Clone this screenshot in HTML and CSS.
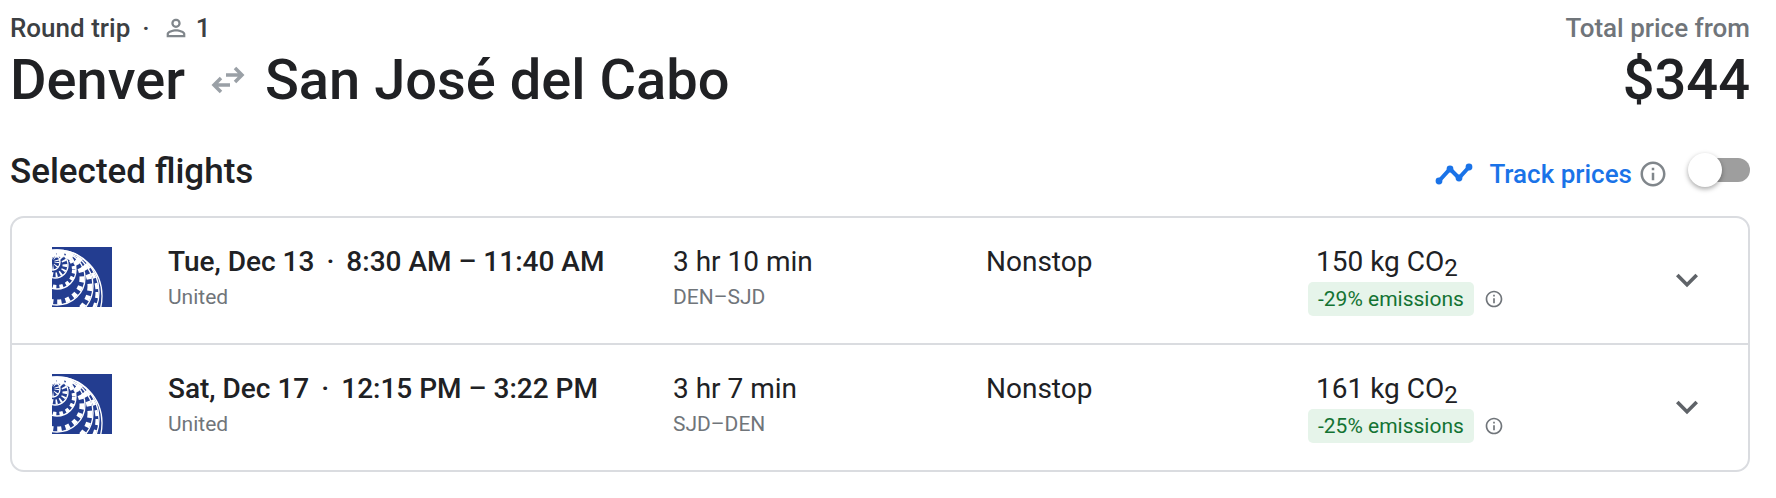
FILE: index.html
```html
<!DOCTYPE html>
<html lang="en">
  <head>
    <meta charset="utf-8">
    <meta name="viewport" content="width=device-width, initial-scale=1">
    <title>Denver to San José del Cabo</title>
    <link rel="stylesheet" href="styles.css">
  </head>
  <body>
    <!-- Shared icons -->
    <svg class="sprite" aria-hidden="true">
      <symbol id="info" viewBox="0 0 24 24">
        <path d="M11 7h2v2h-2zm0 4h2v6h-2zm1-9C6.48 2 2 6.48 2 12s4.48 10 10 10 10-4.48 10-10S17.52 2 12 2zm0 18c-4.41 0-8-3.59-8-8s3.59-8 8-8 8 3.59 8 8-3.59 8-8 8z"/>
      </symbol>
      <symbol id="chevron" viewBox="0 0 24 24">
        <path d="M7.41 8.59L12 13.17l4.59-4.58L18 10l-6 6-6-6z"/>
      </symbol>
      <symbol id="united" viewBox="0 0 60 60">
        <rect width="60" height="60" fill="#233d90"/>
        <g fill="none" stroke="#fff">
          <g stroke-width="1.3">
            <ellipse cx="1" cy="15" rx="7" ry="8"/>
            <ellipse cx="3" cy="18" rx="13" ry="13"/>
            <ellipse cx="5" cy="23" rx="19" ry="19"/>
            <ellipse cx="5" cy="31" rx="28" ry="27"/>
            <ellipse cx="5" cy="39" rx="36" ry="35"/>
            <ellipse cx="5" cy="45" rx="42" ry="42"/>
            <ellipse cx="5" cy="49" rx="45" ry="46"/>
          </g>
          <ellipse cx="1" cy="15" rx="4" ry="5" stroke-width="5" stroke-dasharray="1 2.2"/>
          <ellipse cx="3" cy="18" rx="10" ry="10" stroke-width="5" stroke-dasharray="1.8 2.6"/>
          <ellipse cx="5" cy="23" rx="17" ry="17" stroke-width="4" stroke-dasharray="3.6 3.2"/>
          <ellipse cx="5" cy="31" rx="25" ry="24" stroke-width="5" stroke-dasharray="4.4 4"/>
          <ellipse cx="5" cy="39" rx="33" ry="32" stroke-width="5" stroke-dasharray="5 4.6"/>
          <ellipse cx="5" cy="45" rx="40" ry="40" stroke-width="3" stroke-dasharray="6 5"/>
        </g>
      </symbol>
    </svg>

    <div class="container">
      <header class="trip">
        <div>
          <div class="trip-info">
            <span>Round trip</span>
            <span class="dot">·</span>
            <svg class="person" viewBox="0 0 24 24" aria-hidden="true">
              <path d="M12 5.9a2.1 2.1 0 1 1 0 4.2 2.1 2.1 0 0 1 0-4.2m0 9c2.97 0 6.1 1.46 6.1 2.1v1.1H5.9V17c0-.64 3.13-2.1 6.1-2.1M12 4C9.79 4 8 5.79 8 8s1.79 4 4 4 4-1.79 4-4-1.79-4-4-4zm0 9c-2.67 0-8 1.34-8 4v3h16v-3c0-2.66-5.33-4-8-4z"/>
            </svg>
            <span>1</span>
          </div>
          <h1>
            Denver
            <svg class="swap" viewBox="0 0 34 28" aria-label="to and from">
              <path d="M15 9h16M24 2l7 7-7 7M19 19H3M10 12l-7 7 7 7"/>
            </svg>
            San José del Cabo
          </h1>
        </div>
        <div class="total">
          <div class="total-label">Total price from</div>
          <div class="price">$344</div>
        </div>
      </header>

      <div class="section-header">
        <h2>Selected flights</h2>
        <div class="track">
          <svg class="trend" viewBox="0 0 38 22" aria-hidden="true">
            <path d="M4 18L15 6l9 9L34 4"/>
            <circle cx="4" cy="18" r="3.4"/>
            <circle cx="15" cy="6" r="3.4"/>
            <circle cx="24" cy="15" r="3.4"/>
            <circle cx="34" cy="4" r="3.4"/>
          </svg>
          <label for="track">Track prices</label>
          <button class="icon-button" aria-label="About price tracking">
            <svg class="info-large"><use href="#info"/></svg>
          </button>
          <input class="toggle" type="checkbox" id="track">
        </div>
      </div>

      <ul class="flights">
        <li class="flight">
          <svg class="logo" aria-hidden="true"><use href="#united"/></svg>
          <div>
            <div class="main strong">Tue, Dec 13<span class="dot">·</span>8:30 AM – 11:40 AM</div>
            <div class="sub">United</div>
          </div>
          <div>
            <div class="main">3 hr 10 min</div>
            <div class="sub">DEN–SJD</div>
          </div>
          <div class="main">Nonstop</div>
          <div>
            <div class="main co2">150 kg CO<sub>2</sub></div>
            <div class="emissions">
              <span class="badge">-29% emissions</span>
              <button class="icon-button" aria-label="About emissions">
                <svg class="info-small"><use href="#info"/></svg>
              </button>
            </div>
          </div>
          <button class="icon-button expand" aria-label="Flight details">
            <svg class="chevron"><use href="#chevron"/></svg>
          </button>
        </li>
        <li class="flight">
          <svg class="logo" aria-hidden="true"><use href="#united"/></svg>
          <div>
            <div class="main strong">Sat, Dec 17<span class="dot">·</span>12:15 PM – 3:22 PM</div>
            <div class="sub">United</div>
          </div>
          <div>
            <div class="main">3 hr 7 min</div>
            <div class="sub">SJD–DEN</div>
          </div>
          <div class="main">Nonstop</div>
          <div>
            <div class="main co2">161 kg CO<sub>2</sub></div>
            <div class="emissions">
              <span class="badge">-25% emissions</span>
              <button class="icon-button" aria-label="About emissions">
                <svg class="info-small"><use href="#info"/></svg>
              </button>
            </div>
          </div>
          <button class="icon-button expand" aria-label="Flight details">
            <svg class="chevron"><use href="#chevron"/></svg>
          </button>
        </li>
      </ul>
    </div>
  </body>
</html>
```
FILE: styles.css
```css
* {
  box-sizing: border-box;
  margin: 0;
  padding: 0;
}

body {
  background: #fff;
  color: #202124;
  font-family: 'Google Sans', Roboto, sans-serif;
}

.sprite {
  display: none;
}

svg {
  display: block;
  flex: none;
}

.container {
  padding: 12px 26px 24px 10px;
}

/* Trip summary */
.trip {
  display: flex;
  justify-content: space-between;
}

.trip-info {
  display: flex;
  align-items: center;
  font-size: 26px;
  line-height: 32px;
  font-weight: 500;
  color: #3c4043;
}

.dot {
  margin: 0 12px;
}

.person {
  width: 28px;
  height: 28px;
  margin-right: 6px;
  fill: #80868b;
}

h1 {
  display: flex;
  align-items: center;
  font-size: 56px;
  line-height: 72px;
  font-weight: 500;
}

.swap {
  width: 34px;
  height: 28px;
  margin: 0 20px 0 26px;
  fill: none;
  stroke: #9aa0a6;
  stroke-width: 3.5;
}

.total {
  text-align: right;
}

.total-label {
  font-size: 26px;
  line-height: 32px;
  font-weight: 500;
  color: #70757a;
}

.price {
  font-size: 56px;
  line-height: 72px;
  font-weight: 500;
}

/* Section header */
.section-header {
  display: flex;
  align-items: center;
  justify-content: space-between;
  margin-top: 36px;
  height: 40px;
}

h2 {
  font-size: 35px;
  line-height: 40px;
  font-weight: 500;
}

.track {
  display: flex;
  align-items: center;
  margin-top: 4px;
}

.trend {
  width: 38px;
  height: 22px;
  margin-right: 16px;
  fill: #1a73e8;
}

.trend path {
  fill: none;
  stroke: #1a73e8;
  stroke-width: 4;
}

.track label {
  font-size: 26px;
  line-height: 32px;
  font-weight: 500;
  color: #1a73e8;
}

.icon-button {
  background: none;
  border: none;
  cursor: pointer;
}

.info-large {
  width: 30px;
  height: 30px;
  margin: 0 38px 0 6px;
  fill: #80868b;
}

.toggle {
  position: relative;
  appearance: none;
  width: 44px;
  height: 24px;
  margin-bottom: 8px;
  border-radius: 12px;
  background: #9e9e9e;
  cursor: pointer;
}

.toggle::before {
  content: '';
  position: absolute;
  top: -5px;
  left: -18px;
  width: 34px;
  height: 34px;
  border-radius: 50%;
  background: #fff;
  box-shadow: 0 2px 5px rgba(0, 0, 0, 0.35);
}

.toggle:checked {
  background: #8ab4f8;
}

.toggle:checked::before {
  left: 18px;
  background: #1a73e8;
}

/* Flights */
.flights {
  margin-top: 24px;
  border: 2px solid #dadce0;
  border-radius: 14px;
  list-style: none;
}

.flight {
  display: grid;
  grid-template-columns: 116px 505fr 313fr 322fr 355fr 48px;
  align-items: start;
  padding: 26px 37px 27px 40px;
}

.flight + .flight {
  border-top: 2px solid #dadce0;
}

.logo {
  width: 60px;
  height: 60px;
  margin-top: 3px;
}

.main {
  font-size: 28px;
  line-height: 36px;
}

.strong {
  font-weight: 500;
}

.sub {
  font-size: 21px;
  line-height: 34px;
  color: #70757a;
}

.co2 {
  padding-left: 8px;
}

sub {
  font-size: 24px;
  line-height: 0;
  vertical-align: -5px;
}

.emissions {
  display: flex;
  align-items: center;
  gap: 10px;
  margin-top: 2px;
}

.badge {
  padding: 0 10px;
  border-radius: 5px;
  background: #e6f4ea;
  color: #137333;
  font-size: 21px;
  line-height: 34px;
}

.info-small {
  width: 20px;
  height: 20px;
  fill: #70757a;
}

.expand {
  align-self: center;
}

.chevron {
  width: 48px;
  height: 44px;
  fill: #5f6368;
}
```
